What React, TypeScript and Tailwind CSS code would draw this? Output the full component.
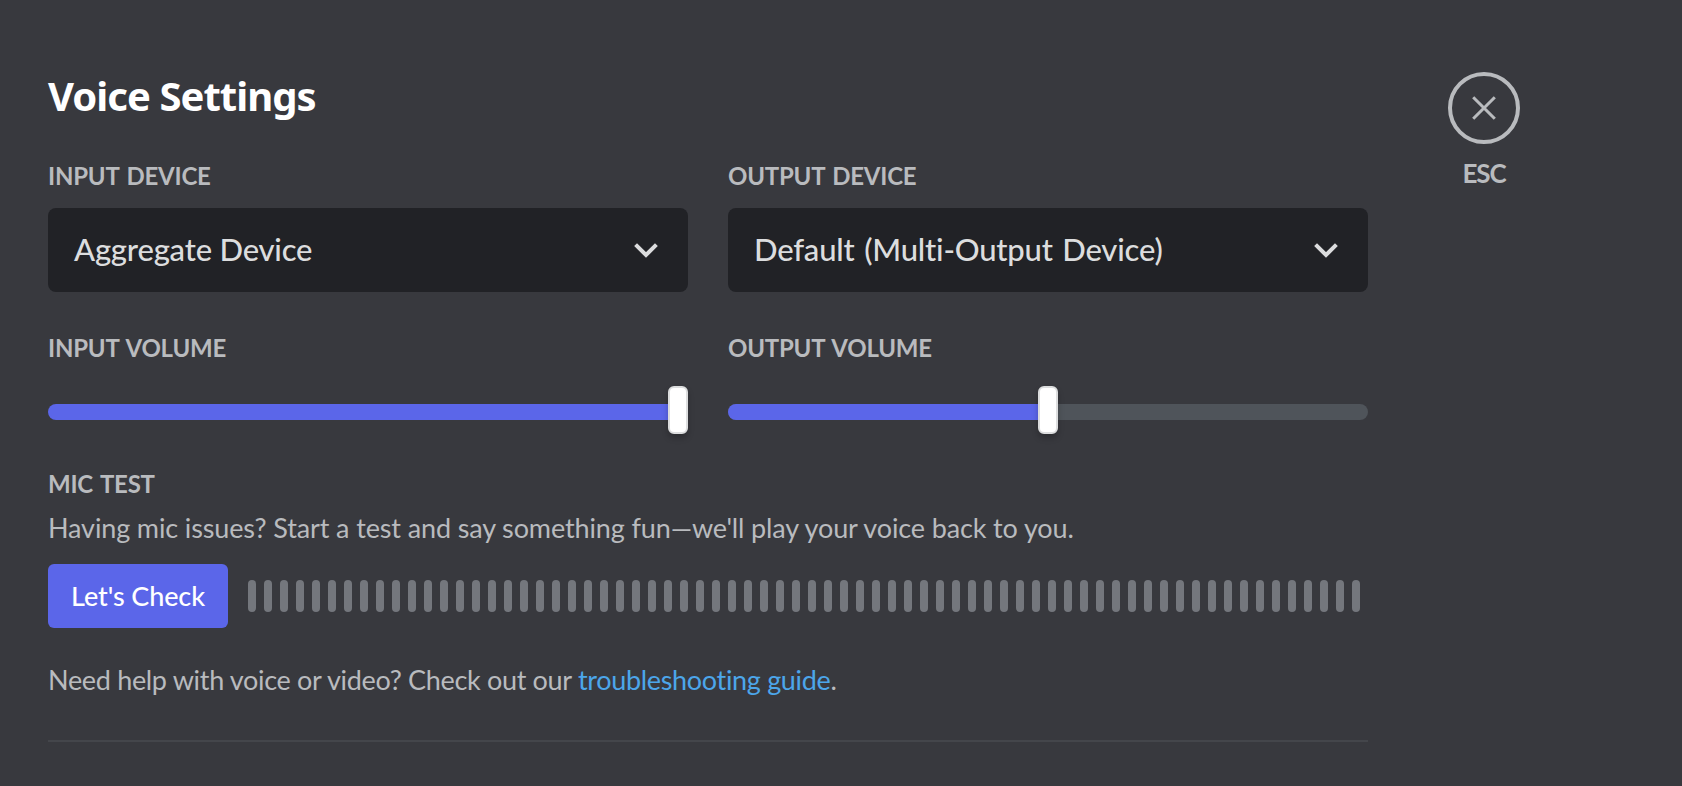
import type { ReactNode } from "react";

function Label({ children }: { children: ReactNode }) {
  return (
    <h2 className="h-8 text-2xl leading-[34px] font-bold tracking-[-0.22px] whitespace-nowrap text-[#b9bbbe] uppercase [word-spacing:2px]">
      {children}
    </h2>
  );
}

function DeviceSelect({ label, children }: { label: string; children: ReactNode }) {
  return (
    <div className="flex w-[640px] flex-col gap-[17px]">
      <Label>{label}</Label>
      <button className="flex h-[84px] items-center justify-between rounded-lg bg-[#212226] pr-[30px] pl-[26px] text-[#dcddde]">
        {children}
        <svg className="mt-[2px] h-6 w-6" viewBox="0 0 24 24" fill="none" stroke="currentColor" strokeWidth="4">
          <path d="M1.6 5.6 12 16 22.4 5.6" />
        </svg>
      </button>
    </div>
  );
}

function VolumeSlider({ label, value }: { label: string; value: number }) {
  const left = value === 100 ? 620 : (value / 100) * 640 - 10;
  return (
    <div className="flex w-[640px] flex-col gap-[23px]">
      <Label>{label}</Label>
      <div className="relative flex h-12 flex-col pt-[18px]">
        <div className="h-4 overflow-hidden rounded-full bg-[#4f545a]">
          <div className="h-full bg-[#5b66e9]" style={{ width: `${value}%` }} />
        </div>
        <div
          className="absolute top-0 h-12 w-5 rounded-md border-2 border-[#dcddde] bg-white shadow-[0_4px_6px_rgba(0,0,0,0.22)]"
          style={{ left }}
        />
      </div>
    </div>
  );
}

export default function App() {
  return (
    <div className="flex h-[786px] w-[1682px] items-start overflow-hidden bg-[#38393e] font-['Lato','Open_Sans',sans-serif]">
      <main className="ml-12 flex w-[1320px] flex-col pt-[70px]">
        <h1 className="h-12 font-['Noto_Sans',sans-serif] text-[40px] leading-[51px] font-bold tracking-[-0.95px] text-white">
          Voice Settings
        </h1>

        <div className="mt-[41px] flex gap-10">
          <DeviceSelect label="Input Device">
            <span className="pb-[3px] text-[31px] leading-10 font-medium tracking-[-0.2px]">Aggregate Device</span>
          </DeviceSelect>
          <DeviceSelect label="Output Device">
            <span className="pb-[3px] text-[31px] leading-10 font-medium tracking-[-0.2px] [word-spacing:2px]">
              Default (Multi-Output Device)
            </span>
          </DeviceSelect>
        </div>

        <div className="mt-[39px] flex gap-10">
          <VolumeSlider label="Input Volume" value={100} />
          <VolumeSlider label="Output Volume" value={50} />
        </div>

        <section className="mt-[33px] flex flex-col">
          <Label>Mic Test</Label>
          <p className="mt-2 h-10 text-[27px] leading-[42px] tracking-[-0.13px] whitespace-nowrap text-[#b9bbbe]">
            Having mic issues? Start a test and say something fun—we'll play your voice back to you.
          </p>
          <div className="mt-[17px] flex items-center gap-5">
            <button className="h-16 w-[180px] rounded-md bg-[#5b66e9] text-[27px] leading-10 font-medium tracking-[-0.1px] whitespace-nowrap text-white">
              Let's Check
            </button>
            <div className="flex gap-2">
              {Array.from({ length: 70 }, (_, i) => (
                <div key={i} className="h-8 w-2 rounded-full bg-[#74777d]" />
              ))}
            </div>
          </div>
        </section>

        <p className="mt-8 h-10 text-[27px] leading-10 tracking-[-0.32px] whitespace-nowrap text-[#b9bbbe]">
          Need help with voice or video? Check out our{" "}
          <a className="text-[#4ca6ea]">troubleshooting guide</a>.
        </p>
        <div className="mt-10 h-0.5 bg-[#44464b]" />
      </main>

      <button className="mt-[72px] ml-20 flex w-[72px] flex-col items-center text-[#b9bbbe]">
        <span className="flex h-[72px] w-[72px] items-center justify-center rounded-full border-4 border-[#b9bbbe]">
          <svg className="h-6 w-6" viewBox="0 0 24 24" fill="none" stroke="currentColor" strokeWidth="3">
            <path d="M1.2 1.2 22.8 22.8M22.8 1.2 1.2 22.8" />
          </svg>
        </span>
        <span className="mt-[13px] text-[26px] leading-8 font-bold tracking-[-1.2px]">ESC</span>
      </button>
    </div>
  );
}
